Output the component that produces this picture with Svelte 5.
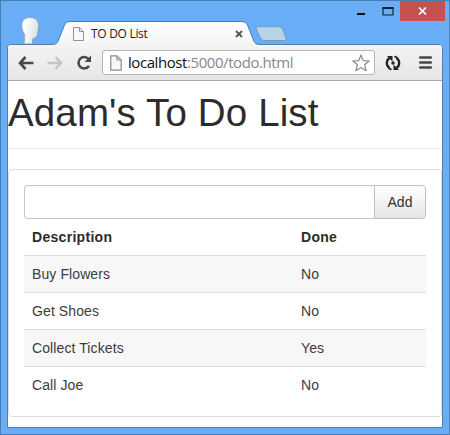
<script>
  const items = [
    { action: 'Buy Flowers', done: false },
    { action: 'Get Shoes', done: false },
    { action: 'Collect Tickets', done: true },
    { action: 'Call Joe', done: false }
  ];
</script>

<div class="window">
  <div class="strip">
    <svg class="avatar" width="20" height="28" viewBox="0 0 20 28">
      <defs>
        <linearGradient id="head" x1="0" x2="1" y1="0" y2="0.3">
          <stop offset="0.2" stop-color="#ffffff" />
          <stop offset="1" stop-color="#dfe3e5" />
        </linearGradient>
      </defs>
      <path d="M10 1.500C4.500 1.500 1.500 5 1.800 9.500C2 14 2.800 16 4.600 18.300C5 21.500 4.600 24 3.800 28H12.700C12.200 25.500 12.300 23.500 13 22.500C16.500 22 17.600 19.500 17.900 15.500C19.800 6.500 17.500 1.500 10 1.500Z" fill="url(#head)" stroke="#8fa9c0" stroke-width="1" />
    </svg>
    <div class="tab">
      <svg class="shape" width="209" height="25" viewBox="0 0 209 25">
        <defs>
          <linearGradient id="tabfill" x1="0" x2="0" y1="0" y2="1">
            <stop offset="0" stop-color="#ffffff" />
            <stop offset="1" stop-color="#f4f4f4" />
          </linearGradient>
        </defs>
        <path d="M0 25V23.500C4 23.500 5 22.500 6.500 19L12.500 4Q14 .5 17 .5H190Q194 .5 195.500 4L202 20.500Q203.500 23.500 207 23.500H209V25Z" fill="url(#tabfill)" />
        <path d="M0 23.500C4 23.500 5 22.500 6.500 19L12.500 4Q14 .5 17 .5H190Q194 .5 195.500 4L202 20.500Q203.500 23.500 207 23.500H209" fill="none" stroke="#417fb9" />
      </svg>
      <svg class="page-icon" width="11" height="14" viewBox="0 0 11 14">
        <path d="M.5.5H6.500L10.500 4.500V13.500H.5ZM6.500.5V4.500H10.500" fill="#f8f8f8" stroke="#929292" />
      </svg>
      <span class="tab-title">TO DO List</span>
      <svg class="tab-close" width="8" height="8" viewBox="0 0 8 8">
        <path d="M1 1L7 7M7 1L1 7" stroke="#555" stroke-width="1.8" />
      </svg>
    </div>
    <svg class="new-tab" width="32" height="16" viewBox="0 0 32 16">
      <path d="M3 .7H24.500Q26.500 .7 27.500 3L31 12Q31.500 14.500 29.500 14.500H9Q6.500 14.500 5.500 12L1.200 3Q.5 .7 3 .7Z" fill="#b7d3e6" stroke="#6c9dc7" />
    </svg>
    <div class="controls">
      <svg width="44" height="20" viewBox="0 0 44 20">
        <path d="M1 13H9" stroke="#111" stroke-width="2" />
        <path d="M27 7H37V14H27Z" fill="none" stroke="#142333" stroke-width="1.2" />
        <path d="M26.500 7H37.500" stroke="#142333" stroke-width="2" />
      </svg>
      <div class="close">
        <svg width="9" height="8" viewBox="0 0 9 8">
          <path d="M1 .5L8 7.500M8 .5L1 7.500" stroke="#fff" stroke-width="1.700" />
        </svg>
      </div>
    </div>
  </div>

  <div class="client">
    <div class="toolbar">
      <svg class="back" width="16" height="14" viewBox="0 0 16 14">
        <path d="M7.500 1L2 7L7.500 13M2 7H15.500" fill="none" stroke="#484848" stroke-width="2.600" />
      </svg>
      <svg class="forward" width="16" height="14" viewBox="0 0 16 14">
        <path d="M8.500 1L14 7L8.500 13M14 7H.5" fill="none" stroke="#c5c5c5" stroke-width="2.400" />
      </svg>
      <svg class="reload" width="16" height="16" viewBox="0 0 16 16">
        <path d="M12.500 4A5.700 5.700 0 1 0 13 10.800" fill="none" stroke="#484848" stroke-width="2.500" />
        <path d="M15 .5V7H8.500Z" fill="#484848" />
      </svg>
      <div class="address">
        <svg width="12" height="16" viewBox="0 0 12 16">
          <path d="M.8.8H7L11.200 5V15.200H.8ZM7 .8V5H11.200" fill="#f8f8f8" stroke="#8c8c8c" stroke-width="1.200" />
        </svg>
        <span class="url">localhost<span class="path">:5000/todo.html</span></span>
        <svg class="star" width="18" height="18" viewBox="0 0 18 18">
          <path d="M9 1L11.200 6.600L17.200 7L12.600 10.800L14.100 16.700L9 13.400L3.900 16.700L5.400 10.800L.8 7L6.800 6.600Z" fill="#fff" stroke="#8a8a8a" stroke-width="1.200" stroke-linejoin="round" />
        </svg>
      </div>
      <svg class="sync" width="16" height="16" viewBox="0 0 16 16">
        <path d="M4.500 13A6 6 0 0 1 4.500 3M11.500 3A6 6 0 0 1 11.500 13" fill="none" stroke="#222" stroke-width="2.300" />
        <path d="M2 1H7.500V6.500ZM14 15H8.500V9.500Z" fill="#222" />
        <path d="M9.500 1.200L12.500 3M6.500 14.800L3.500 13" stroke="#222" stroke-width="1.800" />
        <circle cx="8" cy="8" r="1.700" fill="#222" />
      </svg>
      <svg class="menu" width="13" height="13" viewBox="0 0 13 13">
        <path d="M1.200 1.500H11.800M1.200 6.500H11.800M1.200 11.500H11.800" stroke="#484848" stroke-width="2.500" stroke-linecap="round" />
      </svg>
    </div>

    <div class="content">
      <h1>Adam's To Do List</h1>
      <div class="panel">
        <div class="entry">
          <input type="text" aria-label="New item" />
          <button>Add</button>
        </div>
        <table>
          <thead>
            <tr><th class="description">Description</th><th>Done</th></tr>
          </thead>
          <tbody>
            {#each items as item}
              <tr><td>{item.action}</td><td>{item.done ? 'Yes' : 'No'}</td></tr>
            {/each}
          </tbody>
        </table>
      </div>
    </div>
  </div>
</div>

<style>
  :global(body) {
    margin: 0;
    overflow: hidden;
  }
  * {
    box-sizing: border-box;
  }
  svg {
    display: block;
    flex: none;
  }
  .window {
    width: 450px;
    height: 435px;
    padding: 0 6px 6px;
    display: flex;
    flex-direction: column;
    background: #69adf6;
    border: 1px solid #477eb5;
    font-family: 'Liberation Sans', Arial, sans-serif;
  }
  .strip {
    height: 43px;
    flex: none;
    display: flex;
    align-items: flex-start;
  }
  .avatar {
    margin: 15px 0 0 13px;
  }
  .tab {
    position: relative;
    z-index: 1;
    width: 209px;
    height: 25px;
    margin: 20px 0 0 12px;
    padding: 0 17px 0 21px;
    display: flex;
    align-items: center;
  }
  .shape {
    position: absolute;
    left: 0;
    top: 0;
  }
  .page-icon,
  .tab-title,
  .tab-close {
    position: relative;
  }
  .page-icon {
    margin-right: 7px;
  }
  .tab-title {
    font: 12px/16px 'Open Sans', 'Noto Sans', sans-serif;
    letter-spacing: -0.3px;
    color: #202020;
    white-space: nowrap;
  }
  .tab-close {
    margin: 0 1px 0 auto;
  }
  .new-tab {
    margin: 25px 0 0 -6px;
  }
  .controls {
    display: flex;
    margin-left: auto;
    margin-right: -2px;
  }
  .close {
    width: 45px;
    height: 20px;
    display: flex;
    align-items: center;
    justify-content: center;
    background: #c75050;
  }
  .client {
    flex: 1;
    min-height: 0;
    display: flex;
    flex-direction: column;
    border: 1px solid #4b80b0;
    border-radius: 4px 4px 0 0;
    background: #fff;
  }
  .toolbar {
    height: 36px;
    flex: none;
    display: flex;
    align-items: center;
    padding: 0 10px 0 10px;
    border-bottom: 1px solid #aaa;
    border-radius: 3px 3px 0 0;
    background: linear-gradient(#f4f4f4, #e6e6e6);
  }
  .forward {
    margin-left: 13px;
  }
  .reload {
    margin-left: 13px;
  }
  .address {
    width: 273px;
    height: 25px;
    margin-left: 10px;
    padding: 0 4px 0 7px;
    display: flex;
    align-items: center;
    border: 1px solid #b5b5b5;
    border-radius: 3px;
    background: #fff;
  }
  .url {
    margin-left: 6px;
    font: 15px/20px 'Open Sans', 'Noto Sans', sans-serif;
    letter-spacing: -0.43px;
    color: #111;
    white-space: nowrap;
    margin-top: -2px;
  }
  .path {
    color: #888;
  }
  .star {
    margin-left: auto;
  }
  .sync {
    margin-left: 10px;
  }
  .menu {
    margin-left: auto;
  }
  h1 {
    margin: 0 0 20px;
    height: 68px;
    padding-top: 11px;
    border-bottom: 1px solid #eee;
    font-size: 38.5px;
    line-height: 42px;
    letter-spacing: 0.13px;
    font-weight: 400;
    color: #2c2c2c;
    white-space: nowrap;
  }
  .panel {
    height: 248px;
    padding: 15px;
    border: 1px solid #ddd;
    border-radius: 4px;
  }
  .entry {
    display: flex;
    height: 34px;
  }
  input {
    flex: 1;
    min-width: 0;
    margin: 0;
    border: 1px solid #c6c6c6;
    border-right: 0;
    border-radius: 4px 0 0 4px;
    background: #fff;
  }
  button {
    width: 52px;
    margin: 0;
    padding: 0;
    border: 1px solid #c2c2c2;
    border-radius: 0 4px 4px 0;
    background: linear-gradient(#fff, #e6e6e6);
    font: 14px/20px 'Liberation Sans', Arial, sans-serif;
    color: #333;
  }
  table {
    width: 100%;
    border-collapse: collapse;
    table-layout: fixed;
    font-size: 14px;
    line-height: 20px;
    letter-spacing: 0.1px;
    color: #3c3c3c;
  }
  .description {
    width: 269px;
  }
  th,
  td {
    height: 37px;
    padding: 8px;
    text-align: left;
  }
  th {
    height: 36px;
    letter-spacing: 0.3px;
    color: #2b2b2b;
  }
  td {
    border-top: 1px solid #ddd;
  }
  tbody tr:nth-child(odd) {
    background: #f7f7f7;
  }
</style>
